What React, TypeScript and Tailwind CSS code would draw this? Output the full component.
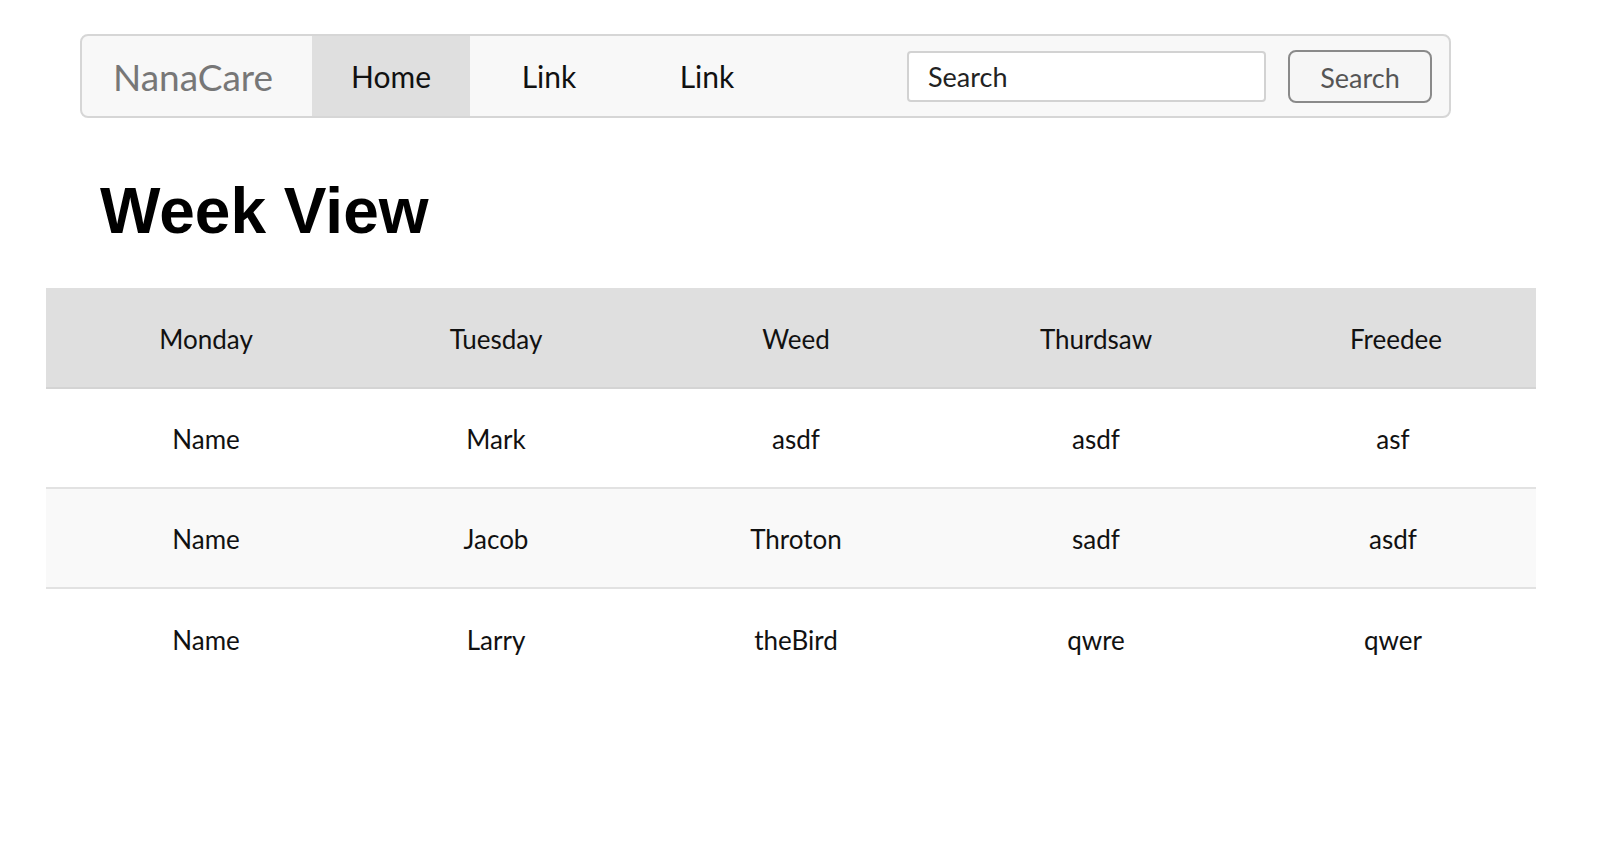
const days = ["Monday", "Tuesday", "Weed", "Thurdsaw", "Freedee"];

const rows = [
  ["Name", "Mark", "asdf", "asdf", "asf"],
  ["Name", "Jacob", "Throton", "sadf", "asdf"],
  ["Name", "Larry", "theBird", "qwre", "qwer"],
];

const navLinks = [
  { label: "Home", active: true },
  { label: "Link", active: false },
  { label: "Link", active: false },
];

// column widths tuned so the cell text sits where the original table put it
const cols = "grid grid-cols-[280px_300px_300px_300px_290px] pl-[20px]";

function Navbar() {
  return (
    <nav className="ml-[80px] flex h-[84px] w-[1371px] items-stretch rounded-[8px] border-2 border-[#d6d6d6] bg-[#f8f8f8]">
      {/* brand */}
      <div className="flex w-[230px] items-center pl-[31px] pt-[2px] text-[37px] text-[#777]">NanaCare</div>

      {/* links */}
      <ul className="flex items-stretch">
        {navLinks.map((link, i) => (
          <li
            key={i}
            className={
              "flex w-[158px] items-center justify-center text-[30px] text-[#111] " +
              (link.active ? "bg-[#dfdfdf]" : "")
            }
          >
            {link.label}
          </li>
        ))}
      </ul>

      {/* search form */}
      <form className="ml-auto flex items-center gap-[22px] pr-[17px]">
        <input
          type="text"
          placeholder="Search"
          className="h-[51px] w-[359px] rounded-[4px] border-2 border-[#d2d2d2] bg-white pl-[19px] pt-[1px] text-[27px] text-[#222] outline-none placeholder:text-[#222]"
        />
        <button
          type="button"
          className="h-[53px] w-[144px] rounded-[8px] border-2 border-[#8a8a8a] bg-[#f6f6f6] pt-[4px] text-[27px] text-[#555]"
        >
          Search
        </button>
      </form>
    </nav>
  );
}

function WeekTable() {
  return (
    <div className="ml-[46px] w-[1490px] text-[26px] text-[#111]">
      <div className={cols + " h-[101px] border-b-2 border-[#d4d4d4] bg-[#dfdfdf]"}>
        {days.map((d, c) => (
          <div
            key={d}
            className={"flex items-center justify-center pt-[3px] " + (c === 4 ? "pl-[10px]" : "")}
          >
            {d}
          </div>
        ))}
      </div>
      {rows.map((row, r) => (
        <div
          key={r}
          className={
            cols +
            " h-[100px] " +
            (r < rows.length - 1 ? "border-b-2 border-[#e2e2e2] " : "") +
            (r === 1 ? "bg-[#f9f9f9]" : "bg-white")
          }
        >
          {row.map((cell, c) => (
            <div
              key={c}
              className={"flex items-center justify-center pt-[3px] " + (c === 4 ? "pl-[4px]" : "")}
            >
              {cell}
            </div>
          ))}
        </div>
      ))}
    </div>
  );
}

export default function App() {
  return (
    <div className="min-h-[866px] w-[1600px] bg-white pt-[34px] font-['Lato',sans-serif]">
      <Navbar />

      <h1 className="mt-[61px] pl-[100px] font-['Liberation_Sans',Arial,sans-serif] text-[64px] leading-[64px] font-bold text-black">
        Week View
      </h1>

      <div className="mt-[45px]">
        <WeekTable />
      </div>
    </div>
  );
}
